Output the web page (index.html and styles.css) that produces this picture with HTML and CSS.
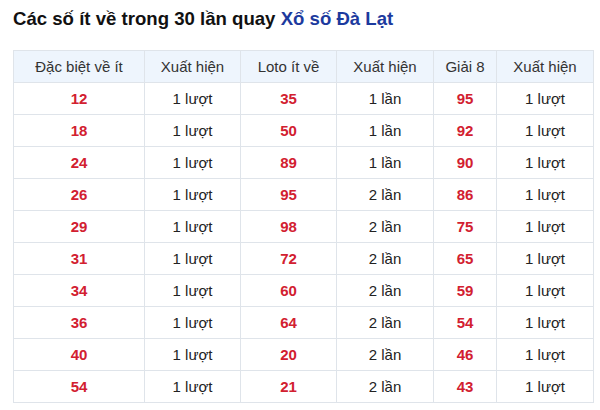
FILE: index.html
```html
<!DOCTYPE html>
<html>
<head>
<meta charset="utf-8">
<link rel="stylesheet" href="styles.css">
</head>
<body>
<h2 class="title">Các số ít về trong 30 lần quay <span class="hl">Xổ số Đà Lạt</span></h2>
<table class="stats">
<colgroup>
<col class="c1"><col class="c2"><col class="c3"><col class="c4"><col class="c5"><col class="c6">
</colgroup>
<thead>
<tr><th>Đặc biệt về ít</th><th>Xuất hiện</th><th>Loto ít về</th><th>Xuất hiện</th><th>Giải 8</th><th>Xuất hiện</th></tr>
</thead>
<tbody>
<tr><td class="n">12</td><td>1 lượt</td><td class="n">35</td><td>1 lần</td><td class="n">95</td><td>1 lượt</td></tr>
<tr><td class="n">18</td><td>1 lượt</td><td class="n">50</td><td>1 lần</td><td class="n">92</td><td>1 lượt</td></tr>
<tr><td class="n">24</td><td>1 lượt</td><td class="n">89</td><td>1 lần</td><td class="n">90</td><td>1 lượt</td></tr>
<tr><td class="n">26</td><td>1 lượt</td><td class="n">95</td><td>2 lần</td><td class="n">86</td><td>1 lượt</td></tr>
<tr><td class="n">29</td><td>1 lượt</td><td class="n">98</td><td>2 lần</td><td class="n">75</td><td>1 lượt</td></tr>
<tr><td class="n">31</td><td>1 lượt</td><td class="n">72</td><td>2 lần</td><td class="n">65</td><td>1 lượt</td></tr>
<tr><td class="n">34</td><td>1 lượt</td><td class="n">60</td><td>2 lần</td><td class="n">59</td><td>1 lượt</td></tr>
<tr><td class="n">36</td><td>1 lượt</td><td class="n">64</td><td>2 lần</td><td class="n">54</td><td>1 lượt</td></tr>
<tr><td class="n">40</td><td>1 lượt</td><td class="n">20</td><td>2 lần</td><td class="n">46</td><td>1 lượt</td></tr>
<tr><td class="n">54</td><td>1 lượt</td><td class="n">21</td><td>2 lần</td><td class="n">43</td><td>1 lượt</td></tr>
</tbody>
</table>
</body>
</html>
```
FILE: styles.css
```css
html, body {
  margin: 0;
  padding: 0;
  background: #ffffff;
}
body {
  padding: 8px 7px 0 13px;
  font-family: "Liberation Sans", Arial, sans-serif;
  color: #222;
}
.title {
  margin: 0 0 20px 0;
  font-size: 18.6px;
  font-weight: bold;
  line-height: 22px;
  color: #111;
}
.hl {
  color: #1c3a9e;
}
.stats {
  border-collapse: collapse;
  width: 580px;
  table-layout: fixed;
  font-size: 15px;
}
.c1 { width: 131px; }
.c2 { width: 96px; }
.c3 { width: 96px; }
.c4 { width: 97px; }
.c5 { width: 63px; }
.c6 { width: 97px; }
.stats th, .stats td {
  border: 1px solid #dfe4ea;
  text-align: center;
  padding: 0;
  height: 31px;
}
.stats th {
  background: #eef5fd;
  font-weight: normal;
  color: #333;
}
.stats td {
  color: #222;
}
.stats td.n {
  color: #d22030;
  font-weight: bold;
}
```
